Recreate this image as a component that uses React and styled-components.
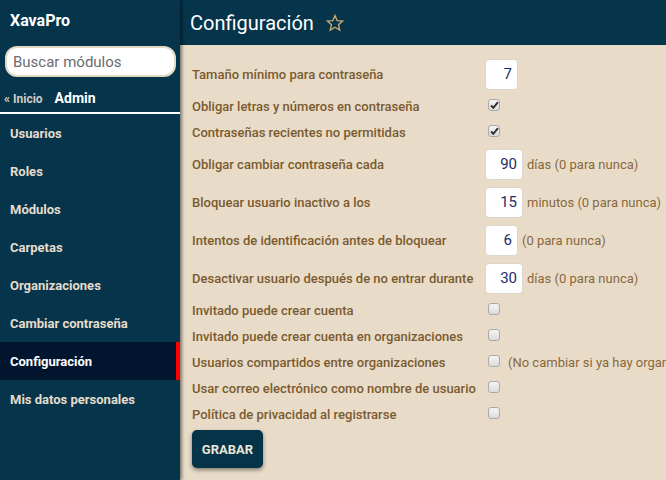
import React from 'react'
import styled, { createGlobalStyle } from 'styled-components'

const Global = createGlobalStyle`
html, body {
  margin: 0;
  padding: 0;
  overflow: hidden;
  font-family: Roboto, 'Liberation Sans', sans-serif;
}
`

const Layout = styled.div`
display: grid;
grid-template-columns: 180px 1fr;
width: 666px;
height: 480px;
overflow: hidden;
background: #e8dcc9;
`

const Sidebar = styled.nav`
background: #05344b;
display: flex;
flex-direction: column;
position: relative;
z-index: 2;
box-shadow: 2px 0 3px rgba(0, 0, 0, 0.45);
`

const Brand = styled.div`
color: #ffffff;
font-weight: 700;
font-size: 16px;
height: 40px;
line-height: 42px;
padding-left: 10px;
`

const Search = styled.input`
box-sizing: border-box;
margin: 6px 4px 0 5px;
width: 171px;
height: 31px;
border: 2px solid #e3d8c4;
border-radius: 12px;
padding: 0 6px;
font-family: Roboto, sans-serif;
font-size: 15px;
outline: none;
&::placeholder {
  color: #6c6c72;
}
`

const Crumbs = styled.div`
display: flex;
align-items: baseline;
gap: 12px;
height: 35px;
line-height: 42px;
padding-left: 4px;
border-bottom: 2px solid #ffffff;

& > a {
  color: #cfcbc4;
  font-size: 12px;
  font-weight: 700;
  text-decoration: none;
}

& > span {
  color: #ffffff;
  font-size: 14px;
  font-weight: 700;
}
`

const MenuItem = styled.a`
box-sizing: border-box;
display: block;
height: 38px;
line-height: 36px;
padding: 2px 0 0 10px;
font-size: 13px;
font-weight: 700;
color: ${p => (p.$active ? '#ffffff' : '#e6dccb')};
background: ${p => (p.$active ? '#02152f' : 'transparent')};
border-right: 4px solid ${p => (p.$active ? '#ff0000' : 'transparent')};
text-decoration: none;
`

const Main = styled.main`
display: flex;
flex-direction: column;
min-width: 0;
`

const Header = styled.header`
background: #05344b;
height: 45px;
display: flex;
align-items: center;
gap: 12px;
padding-left: 10px;
flex-shrink: 0;

& > h1 {
  margin: 0;
  color: #ffffff;
  font-size: 20px;
  font-weight: 400;
}
`

const Content = styled.section`
padding: 10px 0 0 12px;
`

const Row = styled.div`
display: grid;
grid-template-columns: 293px auto;
align-items: center;
height: ${p => (p.$tall ? 38 : 26)}px;
white-space: nowrap;
`

const Label = styled.label`
color: #7b5a2f;
font-size: 13px;
font-weight: 500;
`

const Field = styled.div`
display: flex;
align-items: center;
gap: 4px;
`

const NumberInput = styled.input`
box-sizing: border-box;
width: ${p => (p.$wide ? 38 : 33)}px;
height: 31px;
border: 1px solid #ddd6cb;
border-radius: 4px;
background: #ffffff;
text-align: right;
padding: 0 5px;
font-family: Roboto, sans-serif;
font-size: 15px;
color: #1d2d66;
outline: none;
`

const Hint = styled.span`
color: #88683d;
font-size: 13px;
`

const Box = styled.span`
box-sizing: border-box;
display: inline-flex;
align-items: center;
justify-content: center;
width: 12px;
height: 12px;
margin: 0 4px 2px 3px;
border: 1px solid #a9a9a9;
border-radius: 3px;
background: linear-gradient(#f4f4f4, #dcdcdc);
`

const Button = styled.button`
margin-top: 3px;
width: 71px;
height: 38px;
border: none;
border-radius: 5px;
background: #053448;
color: #ece4d6;
font-family: Roboto, sans-serif;
font-weight: 700;
font-size: 13px;
box-shadow: 0 2px 4px rgba(0, 0, 0, 0.45);
`

const Star = () => (
  <svg width="18" height="18" viewBox="0 0 24 24" fill="none" stroke="#caa86c" strokeWidth="1.8" strokeLinejoin="miter">
    <polygon points="12,2 14.9,8.8 22.2,9.4 16.7,14.2 18.3,21.4 12,17.6 5.7,21.4 7.3,14.2 1.8,9.4 9.1,8.8" />
  </svg>
)

const Check = ({ checked }) => (
  <Box>
    {checked && (
      <svg width="9" height="8" viewBox="0 0 9 8">
        <path d="M1 4.5 L3.3 6.8 L8 1.2" stroke="#333" strokeWidth="2" fill="none" />
      </svg>
    )}
  </Box>
)

const menu = ['Usuarios', 'Roles', 'Módulos', 'Carpetas', 'Organizaciones', 'Cambiar contraseña', 'Configuración', 'Mis datos personales']

const fields = [
  { label: 'Tamaño mínimo para contraseña', value: '7' },
  { label: 'Obligar letras y números en contraseña', check: true },
  { label: 'Contraseñas recientes no permitidas', check: true },
  { label: 'Obligar cambiar contraseña cada', value: '90', hint: 'días (0 para nunca)' },
  { label: 'Bloquear usuario inactivo a los', value: '15', hint: 'minutos (0 para nunca)' },
  { label: 'Intentos de identificación antes de bloquear', value: '6', hint: '(0 para nunca)' },
  { label: 'Desactivar usuario después de no entrar durante', value: '30', hint: 'días (0 para nunca)' },
  { label: 'Invitado puede crear cuenta', check: false },
  { label: 'Invitado puede crear cuenta en organizaciones', check: false },
  { label: 'Usuarios compartidos entre organizaciones', check: false, hint: '(No cambiar si ya hay organizaciones creadas)' },
  { label: 'Usar correo electrónico como nombre de usuario', check: false },
  { label: 'Política de privacidad al registrarse', check: false },
]

const App = () => {
  return (
    <Layout>
      <Global />
      <Sidebar>
        <Brand>XavaPro</Brand>
        <Search type="text" placeholder="Buscar módulos" />
        <Crumbs>
          <a href="#">« Inicio</a>
          <span>Admin</span>
        </Crumbs>
        {menu.map(item => (
          <MenuItem key={item} href="#" $active={item === 'Configuración'}>{item}</MenuItem>
        ))}
      </Sidebar>
      <Main>
        <Header>
          <h1>Configuración</h1>
          <Star />
        </Header>
        <Content>
          {fields.map(f => (
            <Row key={f.label} $tall={f.value !== undefined}>
              <Label>{f.label}</Label>
              <Field>
                {f.value !== undefined
                  ? <NumberInput readOnly value={f.value} $wide={f.value.length > 1} />
                  : <Check checked={f.check} />}
                {f.hint && <Hint>{f.hint}</Hint>}
              </Field>
            </Row>
          ))}
          <Button>GRABAR</Button>
        </Content>
      </Main>
    </Layout>
  )
}

export default App
